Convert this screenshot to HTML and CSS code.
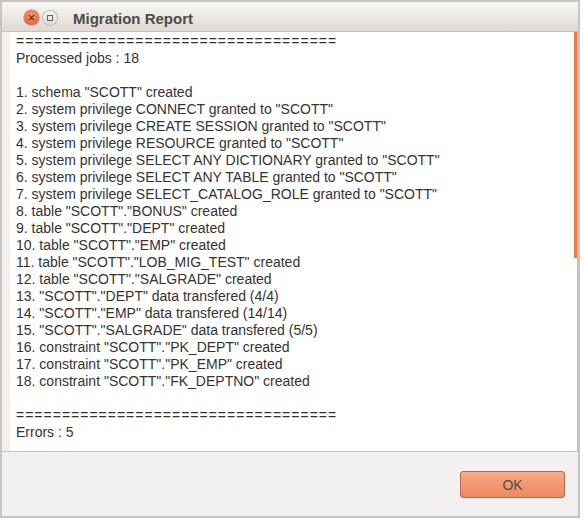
FILE: index.html
```html
<!DOCTYPE html>
<html>
<head>
<meta charset="utf-8">
<title>Migration Report</title>
<link rel="stylesheet" href="styles.css">
</head>
<body>
<div class="window">
  <div class="titlebar">
    <div class="btn-close"><svg width="15" height="15" viewBox="0 0 15 15"><path d="M5.3 5.3 L9.7 9.7 M9.7 5.3 L5.3 9.7" stroke="#5a2a18" stroke-width="1.1" stroke-linecap="round"/></svg></div>
    <div class="btn-min"><svg width="14" height="14" viewBox="0 0 14 14"><rect x="4.5" y="4.5" width="5" height="5" fill="none" stroke="#6a6866" stroke-width="1"/></svg></div>
    <div class="title">Migration Report</div>
  </div>
  <div class="content">
    <div class="textarea">
<pre class="log"><span class="rule">===================================</span>
Processed jobs : 18

1. schema "SCOTT" created
2. system privilege CONNECT granted to "SCOTT"
3. system privilege CREATE SESSION granted to "SCOTT"
4. system privilege RESOURCE granted to "SCOTT"
5. system privilege SELECT ANY DICTIONARY granted to "SCOTT"
6. system privilege SELECT ANY TABLE granted to "SCOTT"
7. system privilege SELECT_CATALOG_ROLE granted to "SCOTT"
8. table "SCOTT"."BONUS" created
9. table "SCOTT"."DEPT" created
10. table "SCOTT"."EMP" created
11. table "SCOTT"."LOB_MIG_TEST" created
12. table "SCOTT"."SALGRADE" created
13. "SCOTT"."DEPT" data transfered (4/4)
14. "SCOTT"."EMP" data transfered (14/14)
15. "SCOTT"."SALGRADE" data transfered (5/5)
16. constraint "SCOTT"."PK_DEPT" created
17. constraint "SCOTT"."PK_EMP" created
18. constraint "SCOTT"."FK_DEPTNO" created

<span class="rule">===================================</span>
Errors : 5</pre>
      <div class="scroll-thumb"></div>
    </div>
  </div>
  <div class="buttonbar">
    <button class="ok">OK</button>
  </div>
</div>
</body>
</html>
```

FILE: styles.css
```css
html, body {
  margin: 0;
  padding: 0;
  background: #ffffff;
}

.window {
  width: 576px;
  height: 514px;
  border: 2px solid #c9c4bf;
  background: #f2f1f0;
  display: flex;
  flex-direction: column;
}

.titlebar {
  height: 30px;
  flex: none;
  border-bottom: 1px solid #cbc2b8;
  background: linear-gradient(to bottom, #f7f6f4 0%, #ece9e5 50%, #ded8d1 100%);
  display: flex;
  align-items: center;
  padding-left: 22px;
  padding-top: 2px;
  box-sizing: border-box;
}

.btn-close {
  width: 15px;
  height: 15px;
  border-radius: 50%;
  background: radial-gradient(circle at 50% 35%, #f79a72 0%, #ef7446 55%, #de5a2c 100%);
  box-shadow: 0 0 0 0.5px #c9562e;
  margin-right: 4px;
  display: flex;
}

.btn-min {
  width: 14px;
  height: 14px;
  border-radius: 50%;
  background: linear-gradient(to bottom, #f4f3f1, #dcd8d3);
  box-shadow: 0 0 0 1px #bcb6b0;
  margin-right: 16px;
  display: flex;
}

.title {
  font-family: "Liberation Sans", Arial, sans-serif;
  font-weight: bold;
  font-size: 15px;
  color: #4c4c4c;
  padding-top: 1px;
}

.content {
  height: 419px;
  flex: none;
  display: flex;
  padding-left: 8px;
  border-bottom: 1px solid #cac3bc;
}

.textarea {
  position: relative;
  flex: 1;
  background: #ffffff;
  border-right: 1px solid #c4beb8;
  overflow: hidden;
}

.log {
  margin: 0;
  padding: 1px 0 0 6px;
  font-family: "Liberation Sans", Arial, sans-serif;
  font-size: 14px;
  line-height: 17px;
  color: #333333;
  white-space: pre;
}

.rule {
  letter-spacing: 1px;
}

.scroll-thumb {
  position: absolute;
  top: 0;
  right: 0;
  width: 3px;
  height: 226px;
  background: #f07746;
}

.buttonbar {
  flex: 1;
  display: flex;
  justify-content: flex-end;
  align-items: flex-start;
  padding: 19px 13px 0 0;
}

.ok {
  width: 105px;
  height: 27px;
  border: 1px solid #b36a4c;
  border-radius: 3px;
  background: linear-gradient(to bottom, #f9ad8c 0%, #f39a73 45%, #ee8a60 100%);
  font-family: "Liberation Sans", Arial, sans-serif;
  font-size: 14px;
  color: #4a4a4a;
  padding: 0;
}
```
